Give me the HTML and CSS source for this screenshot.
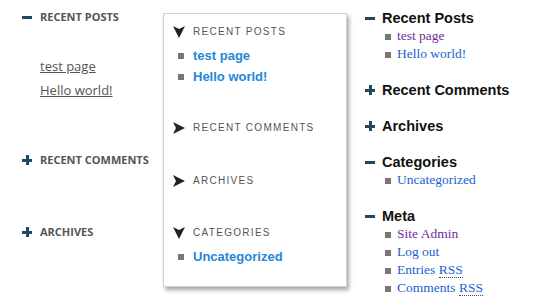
FILE: index.html
```html
<!DOCTYPE html>
<html lang="en">
<head>
    <meta charset="UTF-8">
    <meta name="viewport" content="width=device-width, initial-scale=1.0">
    <title>Widget Toggles</title>
    <link rel="stylesheet" href="styles.css">
</head>
<body>

    <div class="page">

        <!-- flat theme sidebar -->
        <div class="flat-col">
            <div class="flat-section open">
                <h3 class="flat-title"><span class="sign minus"></span>Recent Posts</h3>
                <ul class="flat-list">
                    <li><a href="#">test page</a></li>
                    <li><a href="#">Hello world!</a></li>
                </ul>
            </div>
            <div class="flat-section">
                <h3 class="flat-title"><span class="sign plus"></span>Recent Comments</h3>
            </div>
            <div class="flat-section">
                <h3 class="flat-title"><span class="sign plus"></span>Archives</h3>
            </div>
        </div>

        <!-- boxed sidebar -->
        <div class="box">
            <div class="box-section open">
                <h3 class="box-title"><svg class="arrow down" viewBox="0 0 12 12"><path d="M0 0 L12 6 L0 12 L3 6 Z"/></svg>Recent Posts</h3>
                <ul class="box-list">
                    <li><a href="#">test page</a></li>
                    <li><a href="#">Hello world!</a></li>
                </ul>
            </div>
            <div class="box-section">
                <h3 class="box-title"><svg class="arrow" viewBox="0 0 12 12"><path d="M0 0 L12 6 L0 12 L3 6 Z"/></svg>Recent Comments</h3>
            </div>
            <div class="box-section">
                <h3 class="box-title"><svg class="arrow" viewBox="0 0 12 12"><path d="M0 0 L12 6 L0 12 L3 6 Z"/></svg>Archives</h3>
            </div>
            <div class="box-section open">
                <h3 class="box-title"><svg class="arrow down" viewBox="0 0 12 12"><path d="M0 0 L12 6 L0 12 L3 6 Z"/></svg>Categories</h3>
                <ul class="box-list">
                    <li><a href="#">Uncategorized</a></li>
                </ul>
            </div>
        </div>

        <!-- classic sidebar -->
        <div class="classic-col">
            <div class="classic-section">
                <h3 class="classic-title"><span class="sign minus"></span>Recent Posts</h3>
                <ul class="classic-list">
                    <li><a href="#" class="visited">test page</a></li>
                    <li><a href="#">Hello world!</a></li>
                </ul>
            </div>
            <div class="classic-section">
                <h3 class="classic-title"><span class="sign plus"></span>Recent Comments</h3>
            </div>
            <div class="classic-section">
                <h3 class="classic-title"><span class="sign plus"></span>Archives</h3>
            </div>
            <div class="classic-section">
                <h3 class="classic-title"><span class="sign minus"></span>Categories</h3>
                <ul class="classic-list">
                    <li><a href="#">Uncategorized</a></li>
                </ul>
            </div>
            <div class="classic-section">
                <h3 class="classic-title"><span class="sign minus"></span>Meta</h3>
                <ul class="classic-list">
                    <li><a href="#" class="visited">Site Admin</a></li>
                    <li><a href="#">Log out</a></li>
                    <li><a href="#">Entries <abbr>RSS</abbr></a></li>
                    <li><a href="#">Comments <abbr>RSS</abbr></a></li>
                    <li><a href="#" class="visited">WordPress.org</a></li>
                </ul>
            </div>
        </div>

    </div>

</body>
</html>
```

FILE: styles.css
```css
body {
    margin: 0;
    background-color: #fff;
    overflow: hidden;
}
.page {
    display: flex;
    align-items: flex-start;
    height: 300px;
    overflow: hidden;
}
ul {
    list-style: none;
    margin: 0;
    padding: 0;
}
h3 {
    margin: 0;
}

/* plus / minus toggles */
.sign {
    position: relative;
    display: inline-block;
    width: 10px;
    height: 10px;
    flex-shrink: 0;
}
.sign::before,
.sign::after {
    content: "";
    position: absolute;
    background-color: #1d4a60;
}
.sign::before {
    left: 0;
    top: 4px;
    width: 10px;
    height: 3px;
}
.plus::after {
    left: 4px;
    top: 0;
    width: 3px;
    height: 10px;
}

/* flat column */
.flat-col {
    width: 141px;
    padding: 10px 0 0 22px;
}
.flat-title {
    display: flex;
    align-items: center;
    gap: 8px;
    font-family: "Open Sans", sans-serif;
    font-size: 11px;
    font-weight: bold;
    line-height: 14px;
    text-transform: uppercase;
    color: #555;
}
.flat-section {
    margin-bottom: 58px;
}
.flat-section.open {
    margin-bottom: 51px;
}
.flat-list {
    margin-top: 30px;
    padding-left: 18px;
}
.flat-list a {
    font-family: "Open Sans", sans-serif;
    font-size: 13px;
    line-height: 24px;
    color: #555;
}

/* boxed column */
.box {
    width: 164px;
    margin-top: 13px;
    padding: 11px 9px 19px 9px;
    border: 1px solid #d2d2d2;
    box-shadow: 2px 3px 4px rgba(0, 0, 0, 0.35);
    background-color: #fff;
}
.box-section {
    margin-bottom: 38.5px;
}
.box-section.open {
    margin-bottom: 34px;
}
.box-section:last-child {
    margin-bottom: 0;
}
.box-title {
    display: flex;
    align-items: center;
    gap: 8px;
    font-family: "Liberation Sans", Arial, sans-serif;
    font-size: 10px;
    font-weight: normal;
    letter-spacing: 1.3px;
    line-height: 14px;
    text-transform: uppercase;
    color: #555;
}
.arrow {
    width: 12px;
    height: 12px;
    fill: #222;
}
.arrow.down {
    transform: rotate(90deg);
}
.box-list {
    margin-top: 6px;
}
.box-list li {
    position: relative;
    padding-left: 20px;
    font-size: 13px;
    line-height: 21px;
}
.box-list li::before {
    content: "";
    position: absolute;
    left: 5px;
    top: 8px;
    width: 6px;
    height: 6px;
    background-color: #777;
}
.box-list a {
    font-family: "Liberation Sans", Arial, sans-serif;
    font-size: 13px;
    font-weight: bold;
    color: #2587d8;
    text-decoration: none;
}

/* classic column */
.classic-col {
    margin-left: 18px;
    padding-top: 9px;
}
.classic-section {
    margin-bottom: 18px;
}
.classic-title {
    display: flex;
    align-items: center;
    gap: 7px;
    font-family: "Liberation Sans", Arial, sans-serif;
    font-size: 14.5px;
    font-weight: bold;
    line-height: 18px;
    color: #111;
}
.classic-list li {
    position: relative;
    height: 18px;
    padding-left: 32px;
    font-family: "Liberation Serif", "Times New Roman", serif;
    font-size: 13.5px;
    line-height: 18px;
}
.classic-list li::before {
    content: "";
    position: absolute;
    left: 20px;
    top: 7px;
    width: 6px;
    height: 6px;
    background-color: #777;
}
.classic-list a {
    color: #1a5fcf;
    text-decoration: none;
}
.classic-list a.visited {
    color: #722c9a;
}
.classic-list abbr {
    text-decoration: none;
    border-bottom: 1px dotted #444;
}
```
